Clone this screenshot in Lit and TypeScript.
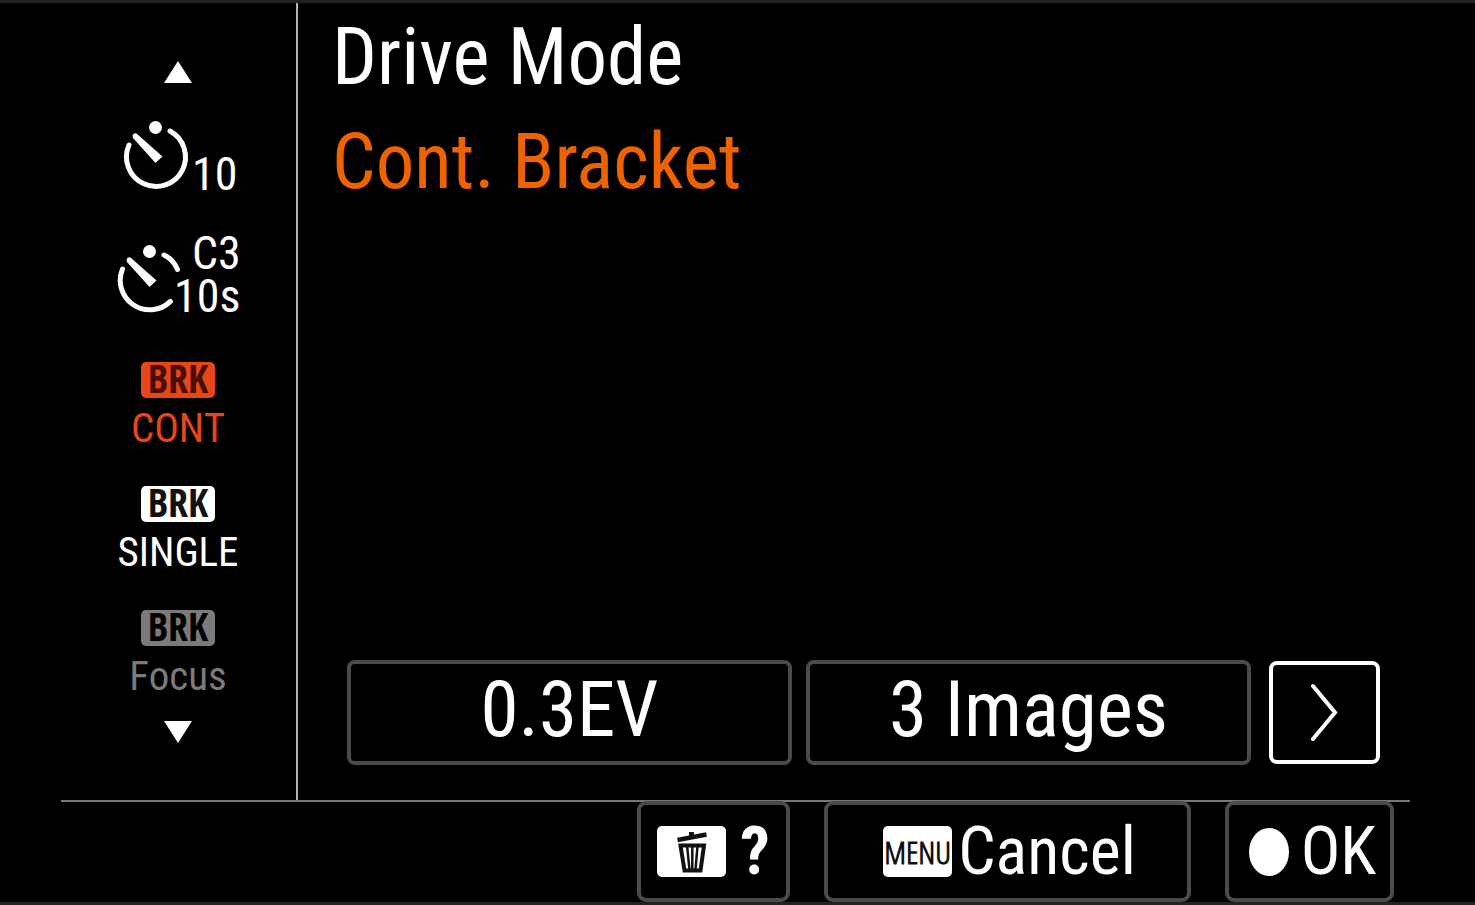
import { LitElement, html, css, svg, nothing } from "lit";
import { customElement, property, state } from "lit/decorators.js";
import { classMap } from "lit/directives/class-map.js";

type Mode = { id: string; label: string; title: string; disabled?: boolean };

const MODES: Mode[] = [
  { id: "timer10", label: "10", title: "Self-timer" },
  { id: "timerCont", label: "C3 10s", title: "Self-timer (Cont.)" },
  { id: "cont", label: "CONT", title: "Cont. Bracket" },
  { id: "single", label: "SINGLE", title: "Single Bracket" },
  { id: "focus", label: "Focus", title: "Focus Bracket", disabled: true },
];

const hand = svg`
  <circle cx="39.500" cy="10.500" r="6.500"></circle>
  <path d="M16.500 19Q17 15.500 20.500 16.500L46.500 39.500L39.500 46L17 21Z"></path>`;

@customElement("mode-icon")
export class ModeIcon extends LitElement {
  @property() mode = "";
  @property() label = "";

  static styles = css`
    :host {
      display: flex;
      flex-direction: column;
      align-items: center;
      justify-content: center;
    }
    .timer {
      display: block;
      width: 124px;
      height: 84px;
      overflow: visible;
      fill: currentColor;
      font-size: 46px;
    }
    .arc {
      fill: none;
      stroke: currentColor;
      stroke-width: 5;
      stroke-linecap: round;
    }
    .badge {
      display: flex;
      align-items: center;
      justify-content: center;
      width: 74px;
      height: 36px;
      border-radius: 5px;
      background: currentColor;
    }
    .brk {
      color: var(--ink, #111);
      font-family: "Open Sans Condensed", "Roboto Condensed", sans-serif;
      font-size: 40px;
      font-weight: 700;
      line-height: 32px;
      padding-bottom: 4px;
    }
    .label {
      margin-top: 6px;
      font-size: 41px;
      line-height: 48px;
    }
  `;

  render() {
    if (this.mode === "timer10") {
      return html`<svg class="timer" viewBox="0 0 124 84" aria-hidden="true">
        ${hand}
        <path class="arc" d="M13 28A29.500 29.500 0 1 0 54 14"></path>
        <text x="76" y="73">10</text>
      </svg>`;
    }
    if (this.mode === "timerCont") {
      return html`<svg class="timer" viewBox="6 0 124 84" aria-hidden="true">
        ${hand}
        <path class="arc" d="M12.500 28A29.500 29.500 0 0 0 60.400 60.400M54 14Q63 18 67.500 28.500"></path>
        <text x="82" y="28">C3</text>
        <text x="64" y="71">10s</text>
      </svg>`;
    }
    return html`<span class="badge"><span class="brk">BRK</span></span><span class="label">${this.label}</span>`;
  }
}

@customElement("app-root")
export class AppRoot extends LitElement {
  @state() private selected = "cont";

  static styles = css`
    :host {
      display: block;
      color: #fff;
      background: #000;
      font-family: "Roboto Condensed", "Liberation Sans Narrow", "Arial Narrow", sans-serif;
    }
    *,
    *::before {
      box-sizing: border-box;
    }
    button {
      margin: 0;
      padding: 0;
      border: 0;
      background: none;
      color: inherit;
      font: inherit;
      cursor: pointer;
    }
    svg {
      display: block;
    }
    .screen {
      display: flex;
      flex-direction: column;
      min-height: 100vh;
      padding: 0 65px 0 61px;
      border-top: 3px solid #222;
      border-bottom: 3px solid #222;
    }
    .body {
      display: flex;
      flex: 1;
    }
    .modes {
      display: flex;
      flex-direction: column;
      width: 237px;
      padding: 58px 1px 0 0;
      border-right: 2px solid #b4b4b4;
    }
    .arrow {
      display: flex;
      justify-content: center;
      height: 33px;
    }
    .arrow.down {
      padding-top: 7px;
    }
    .arrow svg {
      width: 28px;
      height: 22px;
      fill: #fff;
    }
    .mode {
      display: flex;
      align-items: center;
      justify-content: center;
      height: 124px;
      padding-top: 6px;
    }
    .mode.on {
      color: #e6461a;
      --ink: #4a0f00;
    }
    .mode:disabled {
      color: #7b7b7b;
      --ink: #000;
    }
    .detail {
      display: flex;
      flex: 1;
      flex-direction: column;
      justify-content: space-between;
      padding: 2px 30px 35px 0;
    }
    .heading {
      padding-left: 34px;
    }
    h1,
    .heading p {
      margin: 0;
      font-size: 79px;
      font-weight: 400;
      line-height: 105px;
    }
    .heading p {
      color: #ee6200;
      font-size: 77px;
    }
    .options {
      display: flex;
      align-items: center;
      gap: 14px;
      padding-left: 49px;
    }
    .option {
      flex: 1;
      height: 105px;
      padding-bottom: 4px;
      border: 4px solid #4b4b4b;
      border-radius: 8px;
      font-size: 77px;
      line-height: 93px;
    }
    .next {
      display: flex;
      align-items: center;
      justify-content: center;
      width: 111px;
      height: 103px;
      margin-left: 4px;
      border: 4px solid #fff;
      border-radius: 8px;
    }
    .next svg {
      width: 28px;
      height: 60px;
      fill: none;
      stroke: #fff;
      stroke-width: 4;
      stroke-linecap: round;
    }
    .footer {
      display: flex;
      justify-content: flex-end;
      gap: 34px;
      padding-right: 16px;
      border-top: 2px solid #777;
    }
    .key {
      display: flex;
      align-items: center;
      justify-content: center;
      gap: 6px;
      height: 101px;
      margin-top: -1px;
      border: 4px solid #4b4b4b;
      border-radius: 9px;
      font-size: 66px;
      line-height: 93px;
    }
    .help {
      width: 153px;
      gap: 14px;
    }
    .mark {
      font-weight: 700;
    }
    .cancel {
      width: 367px;
      padding-left: 4px;
    }
    .ok {
      width: 169px;
      gap: 12px;
      padding-left: 6px;
    }
    .cap {
      display: flex;
      align-items: center;
      justify-content: center;
      width: 69px;
      height: 51px;
      border-radius: 5px;
      background: #fff;
      color: #111;
      font-family: "Open Sans Condensed Light", "Roboto Condensed", sans-serif;
      font-size: 32px;
      font-weight: 700;
      line-height: 51px;
    }
    .dot {
      width: 40px;
      height: 48px;
      border-radius: 50%;
      background: #fff;
    }
  `;

  private get current() {
    return MODES.find((m) => m.id === this.selected)!;
  }

  private step(by: number) {
    const open = MODES.filter((m) => !m.disabled);
    const at = open.findIndex((m) => m.id === this.selected);
    this.selected = open[(at + by + open.length) % open.length].id;
  }

  render() {
    return html`<div class="screen">
      <div class="body">
        <nav class="modes" aria-label="Drive modes">
          <button class="arrow" aria-label="Previous mode" @click=${() => this.step(-1)}>
            <svg viewBox="0 0 28 22"><path d="M14 0L28 22H0Z"></path></svg>
          </button>
          ${MODES.map(
            (m) => html`<button
              class=${classMap({ mode: true, on: m.id === this.selected })}
              aria-label=${m.title}
              aria-current=${m.id === this.selected ? "true" : nothing}
              ?disabled=${m.disabled}
              @click=${() => (this.selected = m.id)}
            >
              <mode-icon mode=${m.id} label=${m.label}></mode-icon>
            </button>`
          )}
          <button class="arrow down" aria-label="Next mode" @click=${() => this.step(1)}>
            <svg viewBox="0 0 28 22"><path d="M0 0H28L14 22Z"></path></svg>
          </button>
        </nav>
        <main class="detail">
          <header class="heading">
            <h1>Drive Mode</h1>
            <p>${this.current.title}</p>
          </header>
          <div class="options">
            <button class="option">0.3EV</button>
            <button class="option">3 Images</button>
            <button class="next" aria-label="Next option">
              <svg viewBox="0 0 28 60"><path d="M2 3L24 29.500L2 56"></path></svg>
            </button>
          </div>
        </main>
      </div>
      <footer class="footer">
        <button class="key help" aria-label="Help">
          <span class="cap">
            <svg width="30" height="42" viewBox="0 0 30 42" fill="none" stroke="#111">
              <path d="M0.500 9L29.500 3.500" stroke-width="4.500"></path>
              <path d="M14.500 6V1" stroke-width="5"></path>
              <path d="M3.500 14.500H27L23.500 39.500H7.500Z" stroke-width="4"></path>
              <path d="M10 14L12.500 39M15.300 14V39M20.600 14L18.500 39" stroke-width="2.500"></path>
            </svg>
          </span>
          <span class="mark">?</span>
        </button>
        <button class="key cancel"><span class="cap">MENU</span><span>Cancel</span></button>
        <button class="key ok"><span class="dot"></span><span>OK</span></button>
      </footer>
    </div>`;
  }
}
